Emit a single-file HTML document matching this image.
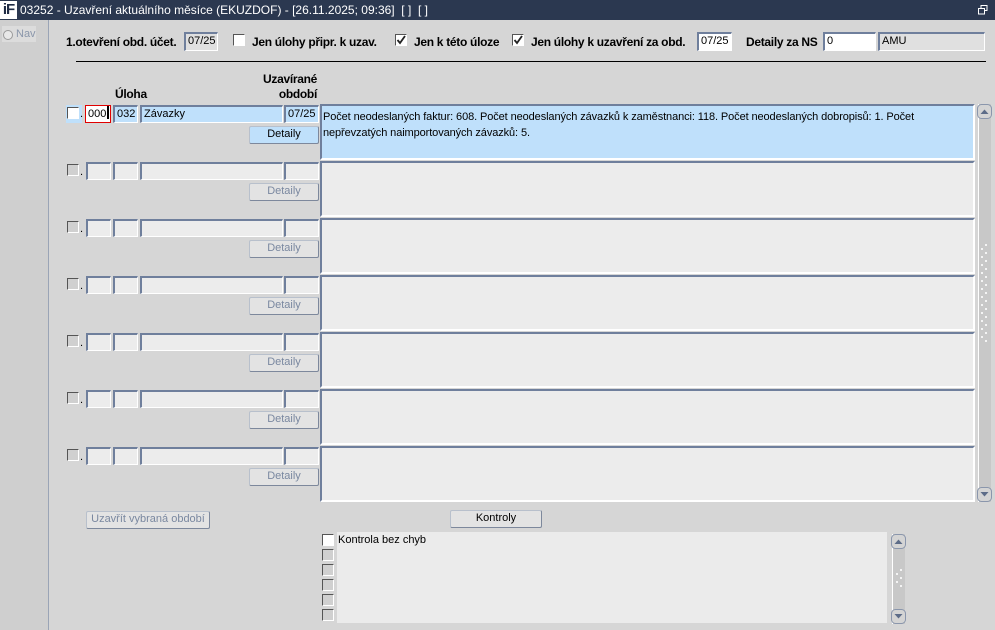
<!DOCTYPE html>
<html><head><meta charset="utf-8">
<style>
*{box-sizing:border-box;margin:0;padding:0}
body{width:995px;height:630px;overflow:hidden;background:#d6d6d6;font-family:"Liberation Sans",Arial,sans-serif;font-size:11px;color:#000;position:relative}
.a{position:absolute}
.tb{left:0;top:0;width:995px;height:20px;background:#2b3850;color:#fff;font-size:12px;line-height:20px}
.logo{left:0;top:1px;width:17px;height:18px;background:#fff;color:#1e2b44;font-weight:bold;font-size:15px;line-height:18px;text-align:center;letter-spacing:-1px}
.nav{left:0;top:20px;width:49px;height:610px;background:#cfcfcf;border-right:1px solid #9aa4b6}
.in{position:absolute;height:18px;background:#ececec;border-top:2px solid #6f7f9c;border-left:2px solid #6f7f9c;border-bottom:1px solid #fff;border-right:1px solid #fff;font-size:11px;line-height:14px;padding-left:2px;white-space:nowrap;overflow:hidden}
.w{background:#fff}
.bl{background:#bfe0fb}
.cb{position:absolute;width:12px;height:12px;background:#d0d0d0;border-top:1px solid #555;border-left:1px solid #555;border-bottom:1px solid #fff;border-right:1px solid #fff}
.cbw{background:#fff}
.lbl{position:absolute;font-weight:bold;white-space:nowrap;font-size:12px;letter-spacing:-0.3px}
.btn{position:absolute;height:18px;background:#e3e3e3;border:1px solid #b8c0cc;border-right-color:#7d889c;border-bottom-color:#7d889c;border-radius:2px;text-align:center;line-height:15px;color:#7a88a0;white-space:nowrap;font-size:11px}
.ta{position:absolute;left:320px;width:655px;height:56px;background:#ececec;border-top:2px solid #6f7f9c;border-left:2px solid #6f7f9c;border-bottom:2px solid #fff;border-right:2px solid #fff}
</style></head><body>
<div class="a tb"><span style="position:absolute;left:20px">03252 - Uzavření aktuálního měsíce (EKUZDOF) - [26.11.2025; 09:36]&nbsp; [ ]&nbsp; [ ]</span>
<svg style="position:absolute;left:978px;top:5px" width="10" height="10"><rect x="3" y="0.5" width="6" height="5" fill="none" stroke="#fff"/><rect x="0.5" y="3.5" width="6" height="5.5" fill="#2b3850" stroke="#fff"/></svg></div>
<div class="a logo">iF</div>
<div class="a nav"><div style="position:absolute;left:2px;top:6px;width:34px;height:16px;background:#dcdcdc"></div>
<div style="position:absolute;left:3px;top:10px;width:10px;height:10px;border-radius:50%;background:#e8e8e8;border:1px solid #9a9a9a"></div>
<span style="position:absolute;left:16px;top:8px;color:#8a96aa">Nav</span></div>

<span class="lbl" style="left:66px;top:35px">1.otevření obd. účet.</span>
<div class="in" style="left:184px;top:32px;width:34px;height:19px;background:#e0e0e0">07/25</div>
<div class="cb cbw" style="left:233px;top:34px"></div>
<span class="lbl" style="left:252px;top:35px">Jen úlohy připr. k uzav.</span>
<div class="cb cbw" style="left:395px;top:34px"><svg style="position:absolute;left:0;top:0" width="10" height="10"><path d="M1.5 5 L4 8 L9 1" fill="none" stroke="#222" stroke-width="1.8"/></svg></div>
<span class="lbl" style="left:414px;top:35px">Jen k této úloze</span>
<div class="cb cbw" style="left:512px;top:34px"><svg style="position:absolute;left:0;top:0" width="10" height="10"><path d="M1.5 5 L4 8 L9 1" fill="none" stroke="#222" stroke-width="1.8"/></svg></div>
<span class="lbl" style="left:531px;top:35px">Jen úlohy k uzavření za obd.</span>
<div class="in w" style="left:697px;top:32px;width:35px;height:19px">07/25</div>
<span class="lbl" style="left:746px;top:35px">Detaily za NS</span>
<div class="in w" style="left:823px;top:32px;width:53px;height:19px">0</div>
<div class="in" style="left:878px;top:32px;width:107px;height:19px;background:#e0e0e0">AMU</div>
<div class="a" style="left:76px;top:61px;width:910px;height:1px;background:#000"></div>

<span class="lbl" style="left:115px;top:87px">Úloha</span>
<span class="lbl" style="left:250px;top:72px;width:67px;text-align:right">Uzavírané</span>
<span class="lbl" style="left:250px;top:87px;width:67px;text-align:right">období</span>

<!-- row 1 -->
<div class="a" style="left:66px;top:105px;width:16px;height:18px;background:#bfe0fb"></div>
<div class="cb cbw" style="left:67px;top:107px"></div><span class="a" style="left:80px;top:108px">.</span>
<div class="in w" style="left:85px;top:105px;width:26px;border:1px solid #e00000">000<span style="display:inline-block;width:2px;height:13px;background:#000;vertical-align:-2px;margin-left:1px"></span></div>
<div class="in bl" style="left:113px;top:105px;width:25px">032</div>
<div class="in bl" style="left:140px;top:105px;width:143px">Závazky</div>
<div class="in bl" style="left:284px;top:105px;width:35px">07/25</div>
<div class="btn" style="left:249px;top:126px;width:70px;background:#bfe0fb;color:#000">Detaily</div>
<div class="ta" style="top:104px;background:#bfe0fb;padding:3px 0 0 1px;line-height:16px;letter-spacing:-0.1px">Počet neodeslaných faktur: 608. Počet neodeslaných závazků k zaměstnanci: 118. Počet neodeslaných dobropisů: 1. Počet nepřevzatých naimportovaných závazků: 5.</div>

<!-- rows 2-7 -->
<div class="cb" style="left:67px;top:164px"></div><span class="a" style="left:80px;top:166px">.</span>
<div class="in" style="left:86px;top:162px;width:25px"></div><div class="in" style="left:113px;top:162px;width:25px"></div><div class="in" style="left:140px;top:162px;width:143px"></div><div class="in" style="left:284px;top:162px;width:35px"></div>
<div class="btn" style="left:249px;top:183px;width:70px">Detaily</div><div class="ta" style="top:161px"></div>

<div class="cb" style="left:67px;top:221px"></div><span class="a" style="left:80px;top:223px">.</span>
<div class="in" style="left:86px;top:219px;width:25px"></div><div class="in" style="left:113px;top:219px;width:25px"></div><div class="in" style="left:140px;top:219px;width:143px"></div><div class="in" style="left:284px;top:219px;width:35px"></div>
<div class="btn" style="left:249px;top:240px;width:70px">Detaily</div><div class="ta" style="top:218px"></div>

<div class="cb" style="left:67px;top:278px"></div><span class="a" style="left:80px;top:280px">.</span>
<div class="in" style="left:86px;top:276px;width:25px"></div><div class="in" style="left:113px;top:276px;width:25px"></div><div class="in" style="left:140px;top:276px;width:143px"></div><div class="in" style="left:284px;top:276px;width:35px"></div>
<div class="btn" style="left:249px;top:297px;width:70px">Detaily</div><div class="ta" style="top:275px"></div>

<div class="cb" style="left:67px;top:335px"></div><span class="a" style="left:80px;top:337px">.</span>
<div class="in" style="left:86px;top:333px;width:25px"></div><div class="in" style="left:113px;top:333px;width:25px"></div><div class="in" style="left:140px;top:333px;width:143px"></div><div class="in" style="left:284px;top:333px;width:35px"></div>
<div class="btn" style="left:249px;top:354px;width:70px">Detaily</div><div class="ta" style="top:332px"></div>

<div class="cb" style="left:67px;top:392px"></div><span class="a" style="left:80px;top:394px">.</span>
<div class="in" style="left:86px;top:390px;width:25px"></div><div class="in" style="left:113px;top:390px;width:25px"></div><div class="in" style="left:140px;top:390px;width:143px"></div><div class="in" style="left:284px;top:390px;width:35px"></div>
<div class="btn" style="left:249px;top:411px;width:70px">Detaily</div><div class="ta" style="top:389px"></div>

<div class="cb" style="left:67px;top:449px"></div><span class="a" style="left:80px;top:451px">.</span>
<div class="in" style="left:86px;top:447px;width:25px"></div><div class="in" style="left:113px;top:447px;width:25px"></div><div class="in" style="left:140px;top:447px;width:143px"></div><div class="in" style="left:284px;top:447px;width:35px"></div>
<div class="btn" style="left:249px;top:468px;width:70px">Detaily</div><div class="ta" style="top:446px"></div>

<!-- main scrollbar -->
<div class="a" style="left:978px;top:104px;width:13px;height:398px;background:#c8c8c8;border-left:1px solid #fff"></div>
<svg class="a" style="left:977px;top:104px" width="15" height="398">
<rect x="0.5" y="0.5" width="14" height="14" rx="4" fill="#d4d4d4" stroke="#8a96ac"/><path d="M3.5 10 L7.5 5.5 L11.5 10Z" fill="#5d6c88"/>
<rect x="0.5" y="383.5" width="14" height="14" rx="4" fill="#d4d4d4" stroke="#8a96ac"/><path d="M3.5 388 L7.5 392.5 L11.5 388Z" fill="#5d6c88"/>
<g fill="#f4f4f4"><rect x="8" y="140" width="2" height="2"/><rect x="4" y="144" width="2" height="2"/><rect x="8" y="148" width="2" height="2"/><rect x="4" y="152" width="2" height="2"/><rect x="8" y="156" width="2" height="2"/><rect x="4" y="160" width="2" height="2"/><rect x="8" y="164" width="2" height="2"/><rect x="4" y="168" width="2" height="2"/><rect x="8" y="172" width="2" height="2"/><rect x="4" y="176" width="2" height="2"/><rect x="8" y="180" width="2" height="2"/><rect x="4" y="184" width="2" height="2"/><rect x="8" y="188" width="2" height="2"/><rect x="4" y="192" width="2" height="2"/><rect x="8" y="196" width="2" height="2"/><rect x="4" y="200" width="2" height="2"/><rect x="8" y="204" width="2" height="2"/><rect x="4" y="208" width="2" height="2"/><rect x="8" y="212" width="2" height="2"/><rect x="4" y="216" width="2" height="2"/><rect x="8" y="220" width="2" height="2"/><rect x="4" y="224" width="2" height="2"/><rect x="8" y="228" width="2" height="2"/><rect x="4" y="232" width="2" height="2"/><rect x="8" y="236" width="2" height="2"/></g>
</svg>

<!-- bottom -->
<div class="btn" style="left:86px;top:511px;width:124px">Uzavřít vybraná období</div>
<div class="btn" style="left:450px;top:510px;width:92px;color:#000">Kontroly</div>
<div class="a" style="left:337px;top:532px;width:550px;height:91px;background:#ebebeb"></div>
<div class="cb cbw" style="left:322px;top:534px"></div><span class="a" style="left:338px;top:534px">Kontrola bez chyb</span>
<div class="cb" style="left:322px;top:549px"></div>
<div class="cb" style="left:322px;top:564px"></div>
<div class="cb" style="left:322px;top:579px"></div>
<div class="cb" style="left:322px;top:594px"></div>
<div class="cb" style="left:322px;top:609px"></div>
<div class="a" style="left:892px;top:534px;width:13px;height:90px;background:#c8c8c8;border-left:1px solid #fff"></div>
<svg class="a" style="left:891px;top:534px" width="15" height="91">
<rect x="0.5" y="0.5" width="14" height="14" rx="4" fill="#d4d4d4" stroke="#8a96ac"/><path d="M3.5 10 L7.5 5.5 L11.5 10Z" fill="#5d6c88"/>
<rect x="0.5" y="75.5" width="14" height="14" rx="4" fill="#d4d4d4" stroke="#8a96ac"/><path d="M3.5 80 L7.5 84.5 L11.5 80Z" fill="#5d6c88"/>
<g fill="#f4f4f4"><rect x="9" y="35" width="2" height="2"/><rect x="5" y="39" width="2" height="2"/><rect x="9" y="43" width="2" height="2"/><rect x="5" y="47" width="2" height="2"/><rect x="9" y="51" width="2" height="2"/></g>
</svg>
</body></html>
